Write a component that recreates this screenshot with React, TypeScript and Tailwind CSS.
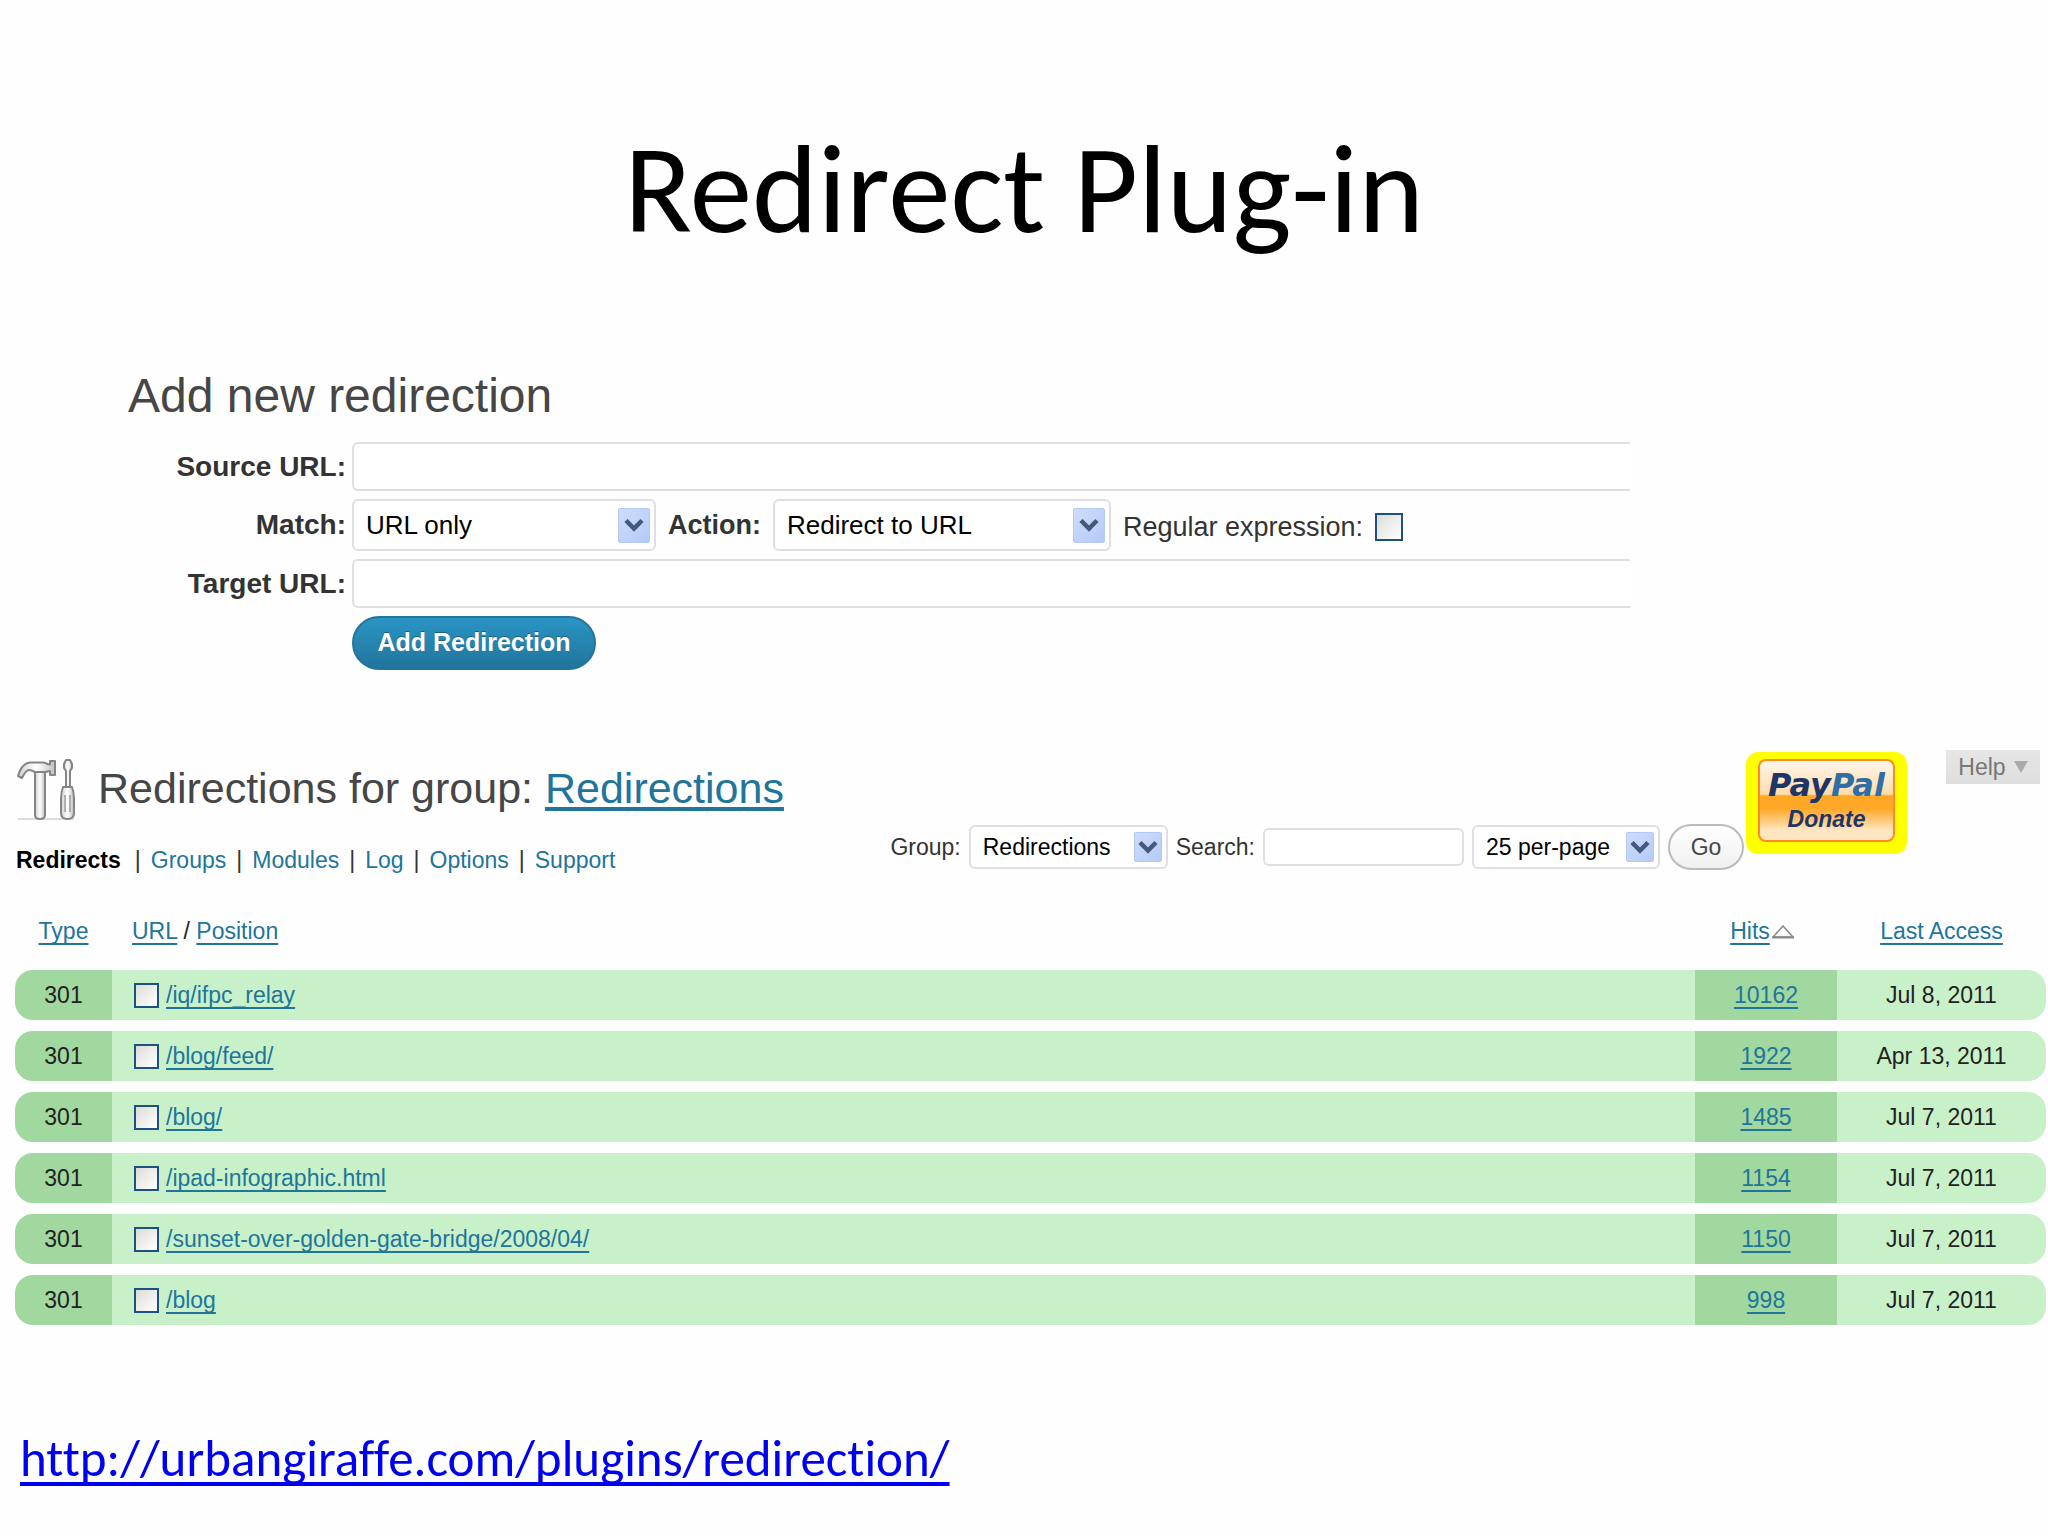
import React from "react";

const ROWS = [
  { url: "/iq/ifpc_relay", hits: "10162", last: "Jul 8, 2011" },
  { url: "/blog/feed/", hits: "1922", last: "Apr 13, 2011" },
  { url: "/blog/", hits: "1485", last: "Jul 7, 2011" },
  { url: "/ipad-infographic.html", hits: "1154", last: "Jul 7, 2011" },
  { url: "/sunset-over-golden-gate-bridge/2008/04/", hits: "1150", last: "Jul 7, 2011" },
  { url: "/blog", hits: "998", last: "Jul 7, 2011" },
];

const TABS = ["Groups", "Modules", "Log", "Options", "Support"];

const CHECKBOX =
  "block shrink-0 appearance-none border-2 border-[#1c5180] bg-linear-to-br from-[#dcdcd7] to-white checked:from-[#1c5180] checked:to-[#1c5180]";

function Select({
  id,
  value,
  size,
  arrow,
}: {
  id: string;
  value: string;
  size: string;
  arrow: string;
}) {
  return (
    <div className={"relative shrink-0 " + size}>
      <select
        id={id}
        aria-label={value}
        className="block h-full w-full appearance-none rounded-md border-2 border-[#dfdfe3] bg-white pl-3 text-black"
      >
        <option>{value}</option>
      </select>
      <span
        className={
          "pointer-events-none absolute inset-y-0 right-1.5 my-auto flex items-center justify-center rounded-xs border border-[#b4c8f4] bg-linear-to-br from-[#cfdcfc] to-[#b3cbf8] " +
          arrow
        }
      >
        <svg viewBox="0 0 20 14" className="h-3.5 w-5" fill="none">
          <path d="M2 2.5 10 10.5 18 2.5" stroke="#44597f" strokeWidth="4.5" />
        </svg>
      </span>
    </div>
  );
}

function ToolsIcon() {
  return (
    <svg viewBox="0 0 60 68" className="h-[68px] w-[60px] shrink-0" aria-hidden="true">
      <defs>
        <linearGradient id="metal" x1="0" x2="1" y1="0" y2="0">
          <stop offset="0" stopColor="#d0d0d0" />
          <stop offset="0.5" stopColor="#ffffff" />
          <stop offset="1" stopColor="#c0c0c0" />
        </linearGradient>
      </defs>
      <path d="M2 65h56" stroke="#dddddd" strokeWidth="2" />
      <g stroke="#858585" strokeWidth="2" strokeLinejoin="round" fill="url(#metal)">
        <path d="M19 17h10v44q0 4-5 4t-5-4z" />
        <path d="M2 22C4 15 8 9 14 8.500h13c3 0 4 2 7 2V7h5v14h-5v-4c-2 0-3 1-5 1H19c-2-1-4-2-6-2-3 0-5 4-7 8z" />
        <path d="M50 6h4l2 4v4l-2 3v16h-4V17l-2-3v-4z" />
        <path d="M47 33h9q2 5 2 12v14q0 6-6.500 6T45 59V45q0-7 2-12z" />
      </g>
      <path d="M49 41v17M54 41v17" stroke="#b0b0b0" strokeWidth="2" />
    </svg>
  );
}

const LABEL = "text-right text-[28px] font-bold leading-8 text-[#333333]";
const LINK = "text-[#21759b] underline decoration-2 underline-offset-4 [text-decoration-skip-ink:none]";

export default function App() {
  return (
    <main className="flex min-h-screen flex-col bg-[#fefefe] font-['Liberation_Sans',Arial,sans-serif] text-[#333333]">
      <h1 className="pt-[120px] text-center font-[Carlito,Calibri,Lato,sans-serif] text-[125px] leading-[140px] text-black">
        Redirect Plug-in
      </h1>

      <section className="pl-32 pr-[418px] pt-[108px]">
        <h2 className="text-[48px] leading-14 text-[#464646]">Add new redirection</h2>
        <form className="grid grid-cols-[218px_1fr] items-center gap-x-1.5 gap-y-2 pt-[18px]" onSubmit={(e) => e.preventDefault()}>
          <label htmlFor="source" className={LABEL}>Source URL:</label>
          <input id="source" type="text" className="h-[49px] w-full rounded-l-md border-2 border-r-0 border-[#dfdfe3] bg-white px-3 text-[26px]" />
          <label htmlFor="match" className={LABEL}>Match:</label>
          <div className="flex items-center gap-3">
            <Select id="match" value="URL only" size="h-[52px] w-[304px] text-[26px]" arrow="h-[35px] w-8" />
            <label htmlFor="action" className="text-[27px] font-bold leading-8">Action:</label>
            <Select id="action" value="Redirect to URL" size="h-[52px] w-[338px] text-[26px]" arrow="h-[35px] w-8" />
            <label htmlFor="regex" className="pt-1 text-[27px] leading-8">Regular expression:</label>
            <span className="pt-1">
              <input id="regex" type="checkbox" className={CHECKBOX + " size-7"} />
            </span>
          </div>
          <label htmlFor="target" className={LABEL}>Target URL:</label>
          <input id="target" type="text" className="h-[49px] w-full rounded-l-md border-2 border-r-0 border-[#dfdfe3] bg-white px-3 text-[26px]" />
          <button
            type="submit"
            className="col-start-2 h-[54px] w-[244px] rounded-full border-2 border-[#21759b] bg-linear-to-b from-[#2a95c5] to-[#21759b] text-[25px] font-bold text-white [text-shadow:0_-1px_0_#1c5f80]"
          >
            Add Redirection
          </button>
        </form>
      </section>

      <section className="pt-20">
        <header className="flex items-start pl-4 pr-2">
          <div className="grow">
            <h2 className="flex items-center gap-[22px] pt-1 text-[43px] leading-[68px] text-[#464646]">
              <ToolsIcon />
              <span>
                Redirections for group:{" "}
                <a href="#group" className="text-[#21759b] underline decoration-4 underline-offset-4">Redirections</a>
              </span>
            </h2>
            <nav className="flex gap-2.5 pt-6 text-[23px] leading-7">
              <a href="#redirects" className="mr-1 font-bold text-black">Redirects</a>
              {TABS.map((tab) => (
                <React.Fragment key={tab}>
                  <span>|</span>
                  <a href={"#" + tab.toLowerCase()} className="text-[#21759b]">{tab}</a>
                </React.Fragment>
              ))}
            </nav>
          </div>

          <form className="flex items-center gap-2 pt-[74px] text-[23px] leading-7" onSubmit={(e) => e.preventDefault()}>
            <label htmlFor="group">Group:</label>
            <Select id="group" value="Redirections" size="h-11 w-[199px]" arrow="h-[30px] w-7" />
            <label htmlFor="search">Search:</label>
            <input id="search" type="text" className="h-[38px] w-[201px] rounded-md border-2 border-[#dfdfe3] bg-white px-2" />
            <Select id="per-page" value="25 per-page" size="h-11 w-[188px]" arrow="h-[30px] w-7" />
            <button type="submit" className="h-[46px] w-[76px] rounded-full border-2 border-[#bbbbbb] bg-linear-to-b from-white to-[#f0f0f0] text-[#464646]">
              Go
            </button>
          </form>

          <button type="button" className="ml-0.5 mt-0.5 shrink-0 rounded-xl bg-[#ffff00] px-3 pb-3 pt-[7px]">
            <span className="flex h-[83px] w-[137px] flex-col items-center rounded-lg border-2 border-[#ff8a1e] bg-linear-to-b from-[#fff6ea] from-0% via-[#ffa420] via-45% to-[#ffe9c9] to-90% bg-[linear-gradient(to_bottom,#fff6ea_0%,#ffdcab_42%,#ffa726_44%,#ffa726_60%,#ffe6c2_88%,#ffe6c2_100%)] pt-1 italic">
              <span className="font-['DejaVu_Sans',sans-serif] text-[32px] font-bold leading-10 text-[#1d3567]">
                Pay<span className="text-[#2f6fa5]">Pal</span>
              </span>
              <span className="text-[23px] font-bold leading-7 text-[#1d3567]">Donate</span>
            </span>
          </button>

          <button type="button" className="ml-[39px] flex h-[34px] w-[94px] shrink-0 items-center justify-center gap-2 bg-linear-to-b from-[#e6e6e6] to-[#dedede] text-[23px] text-[#777777]">
            Help
            <svg viewBox="0 0 14 12" className="h-3 w-3.5" fill="#aaaaaa"><path d="M0 0h14L7 12z" /></svg>
          </button>
        </header>

        <div className="pl-[15px] pr-0.5 pt-[18px]">
          <table className="w-full table-fixed border-separate border-spacing-x-0 border-spacing-y-[11px] text-[23px] leading-7 text-[#222222]">
            <colgroup>
              <col className="w-[97px]" />
              <col />
              <col className="w-[142px]" />
              <col className="w-[209px]" />
            </colgroup>
            <thead>
              <tr className="h-14">
                <th className="font-normal"><a href="#type" className={LINK}>Type</a></th>
                <th className="pl-5 text-left font-normal">
                  <a href="#url" className={LINK}>URL</a>
                  {" / "}
                  <a href="#position" className={LINK}>Position</a>
                </th>
                <th className="pr-2 font-normal">
                  <a href="#hits" className={LINK}>Hits</a>
                  <svg viewBox="0 0 22 14" className="ml-0.5 inline h-3.5 w-[22px] align-baseline" fill="none">
                    <path d="M1 12 11 1l10 11z" stroke="#888888" strokeWidth="1.500" />
                    <path d="M0 12.500h22" stroke="#888888" strokeWidth="2" />
                  </svg>
                </th>
                <th className="font-normal"><a href="#last" className={LINK}>Last Access</a></th>
              </tr>
            </thead>
            <tbody>
              {ROWS.map((row) => (
                <tr key={row.url} className="h-[50px]">
                  <td className="rounded-l-[18px] bg-[#a0d8a0] text-center">301</td>
                  <td className="bg-[#c9f1c9]">
                    <span className="flex items-center gap-[7px] pl-[22px]">
                      <input type="checkbox" aria-label={row.url} className={CHECKBOX + " size-[25px]"} />
                      <a href={"#" + row.url} className={LINK}>{row.url}</a>
                    </span>
                  </td>
                  <td className="bg-[#a0d8a0] text-center"><a href={"#hits" + row.hits} className={LINK}>{row.hits}</a></td>
                  <td className="rounded-r-[18px] bg-[#c9f1c9] text-center">{row.last}</td>
                </tr>
              ))}
            </tbody>
          </table>
        </div>
      </section>

      <p className="pl-5 pt-[92px] font-[Carlito,Calibri,Lato,sans-serif] text-[51px] leading-[62px]">
        <a href="http://urbangiraffe.com/plugins/redirection/" className="text-[#0000f0] underline decoration-4 underline-offset-[6px] [font-variant-ligatures:none] [text-decoration-skip-ink:none]">
          http://urbangiraffe.com/plugins/redirection/
        </a>
      </p>
    </main>
  );
}
